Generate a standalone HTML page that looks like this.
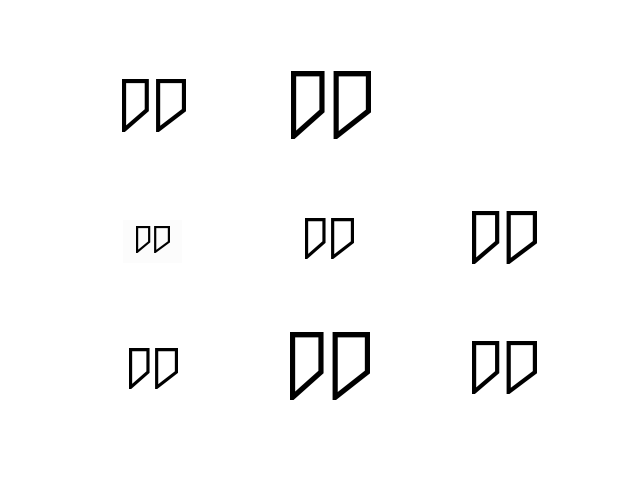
<!DOCTYPE html>
<html><head><meta charset="utf-8"><style>
html,body{margin:0;padding:0;background:#fff;width:640px;height:480px;overflow:hidden;position:relative}
svg{position:absolute}
.bg{position:absolute;left:123px;top:220px;width:59px;height:43px;background:#fcfcfc}
</style></head><body>
<div class="bg"></div>
<svg width="0" height="0" style="position:absolute"><defs>
<g id="q"><path d="M2,2 H24 V30 L2,49 Z M35,2 H60 V30 L35,49 Z" fill="none" stroke="#000" stroke-width="4" stroke-linejoin="miter"/></g>
</defs></svg>
<svg style="left:122px;top:79px" width="64" height="53" viewBox="0 0 62 51" preserveAspectRatio="none"><use href="#q"/></svg>
<svg style="left:291px;top:71px" width="80" height="68" viewBox="0 0 62 51" preserveAspectRatio="none"><use href="#q"/></svg>
<svg style="left:136px;top:226px" width="34" height="27" viewBox="0 0 62 51" preserveAspectRatio="none"><use href="#q"/></svg>
<svg style="left:305px;top:218px" width="49" height="41" viewBox="0 0 62 51" preserveAspectRatio="none"><use href="#q"/></svg>
<svg style="left:472px;top:211px" width="65" height="53" viewBox="0 0 62 51" preserveAspectRatio="none"><use href="#q"/></svg>
<svg style="left:129px;top:348px" width="49" height="41" viewBox="0 0 62 51" preserveAspectRatio="none"><use href="#q"/></svg>
<svg style="left:290px;top:332px" width="80" height="68" viewBox="0 0 62 51" preserveAspectRatio="none"><use href="#q"/></svg>
<svg style="left:472px;top:341px" width="65" height="53" viewBox="0 0 62 51" preserveAspectRatio="none"><use href="#q"/></svg>
</body></html>
